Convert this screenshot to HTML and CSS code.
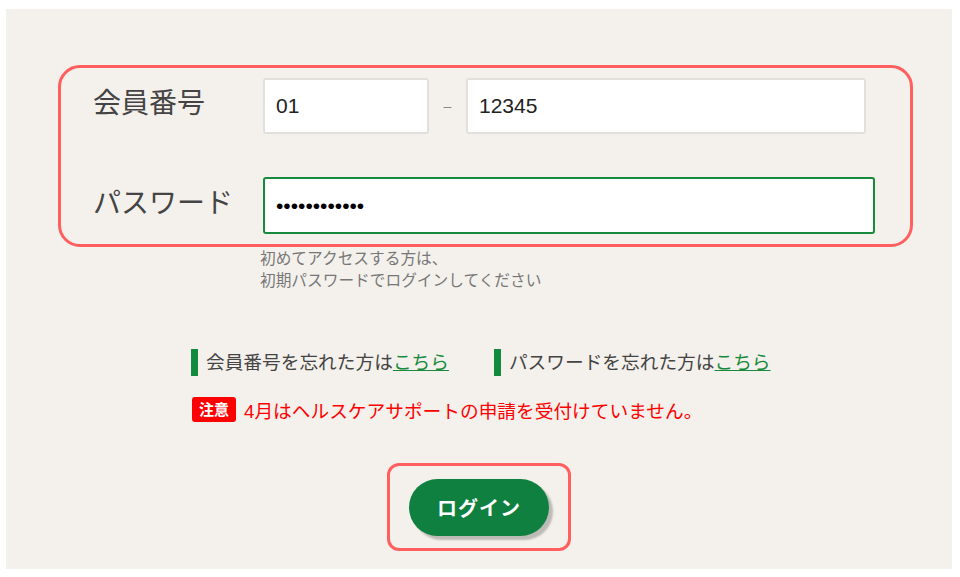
FILE: index.html
```html
<!DOCTYPE html>
<html lang="ja">

<head>
    <meta charset="UTF-8">
    <meta name="viewport" content="width=device-width, initial-scale=1.0">
    <title>ログイン</title>
    <link rel="stylesheet" href="styles.css">
</head>

<body>

    <div class="panel">

        <!-- Login Form -->
        <form class="login-box" onsubmit="return false">
            <label class="field-label" for="memberA">会員番号</label>
            <div class="member-row">
                <input type="text" id="memberA" class="text-input member-a" value="01">
                <span class="dash">–</span>
                <input type="text" id="memberB" class="text-input member-b" value="12345">
            </div>

            <label class="field-label" for="password">パスワード</label>
            <div class="password-row">
                <input type="password" id="password" class="text-input password-input" value="............">
            </div>
        </form>

        <p class="hint">初めてアクセスする方は、<br>初期パスワードでログインしてください</p>

        <!-- Help Links -->
        <div class="help-links">
            <div class="help-item">会員番号を忘れた方は<a href="#">こちら</a></div>
            <div class="help-item">パスワードを忘れた方は<a href="#">こちら</a></div>
        </div>

        <div class="notice">
            <span class="notice-badge">注意</span>
            <span class="notice-text">4月はヘルスケアサポートの申請を受付けていません。</span>
        </div>

        <div class="login-btn-box">
            <button class="login-btn" type="button">ログイン</button>
        </div>

    </div>

</body>

</html>
```

FILE: styles.css
```css
body {
    margin: 0;
    padding: 0;
    background-color: #ffffff;
    font-family: "Liberation Sans", "Noto Sans CJK JP", sans-serif;
    color: #444444;
}

.panel {
    margin: 9px 8px 0 6px;
    height: 560px;
    padding-top: 56px;
    box-sizing: border-box;
    background-color: #f4f1ec;
}

.login-box {
    display: grid;
    grid-template-columns: 170px auto;
    row-gap: 43px;
    align-items: center;
    width: 855px;
    margin: 0 0 0 52px;
    padding: 10px 0 10px 32px;
    box-sizing: border-box;
    border: 3px solid #ff5f5f;
    border-radius: 22px;
}

.field-label {
    font-size: 28px;
    line-height: 40px;
    color: #444444;
    margin-top: -4px;
}

.member-row {
    display: flex;
    align-items: center;
}

.dash {
    width: 37px;
    text-align: center;
    font-size: 14px;
    color: #888888;
}

.text-input {
    height: 56px;
    padding: 0 11px;
    box-sizing: border-box;
    border: 2px solid #e2e0dd;
    border-radius: 3px;
    background-color: #ffffff;
    font-family: "Liberation Sans", sans-serif;
    font-size: 21px;
    color: #222222;
    outline: none;
}

.member-a {
    width: 166px;
}

.member-b {
    width: 400px;
}

.password-input {
    width: 612px;
    height: 57px;
    border: 2px solid #178a3c;
    color: #000000;
}

.hint {
    margin: 1px 0 0 254px;
    font-size: 15.7px;
    line-height: 22px;
    color: #777777;
}

.help-links {
    display: flex;
    gap: 45px;
    margin: 57px 0 0 185px;
}

.help-item {
    height: 27px;
    line-height: 27px;
    padding-left: 8px;
    border-left: 7px solid #118a3e;
    font-size: 18.7px;
    color: #444444;
}

.help-item a {
    color: #178a3c;
    text-decoration: underline;
}

.notice {
    display: flex;
    align-items: center;
    gap: 8px;
    margin: 20px 0 0 186px;
}

.notice-badge {
    height: 25px;
    line-height: 25px;
    padding: 0 7px;
    border-radius: 3px;
    background-color: #ff0000;
    color: #ffffff;
    font-size: 15px;
    font-weight: bold;
}

.notice-text {
    font-size: 18.7px;
    color: #ff0000;
}

.login-btn-box {
    display: flex;
    align-items: center;
    justify-content: center;
    width: 184px;
    height: 88px;
    margin: 40px auto 0;
    box-sizing: border-box;
    border: 3px solid #ff5f5f;
    border-radius: 12px;
}

.login-btn {
    width: 140px;
    height: 57px;
    border: none;
    border-radius: 30px;
    background-color: #0f8040;
    box-shadow: 4px 4px 2px #bdbbb6;
    color: #ffffff;
    font-family: "Noto Sans CJK JP", sans-serif;
    font-size: 20px;
    font-weight: bold;
    letter-spacing: 1px;
    cursor: pointer;
}
```
